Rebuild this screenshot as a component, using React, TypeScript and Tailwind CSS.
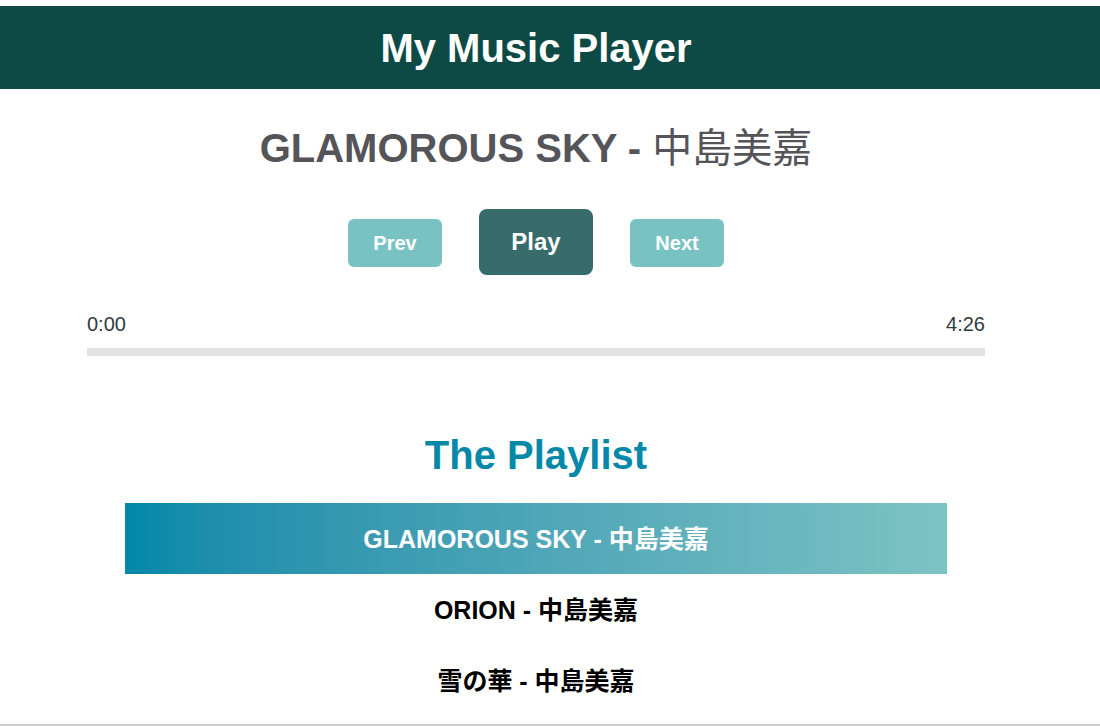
import React from "react";

const songs = [
  { title: "GLAMOROUS SKY", artist: "中島美嘉" },
  { title: "ORION", artist: "中島美嘉" },
  { title: "雪の華", artist: "中島美嘉" },
];

export default function App() {
  return (
    <div className="w-[1100px] h-[726px] overflow-hidden bg-white font-['Liberation_Sans','Noto_Sans_CJK_JP',sans-serif] flex flex-col">
      <header className="mt-[6px] h-[83px] w-full bg-[#0d4a45] shrink-0">
        <div className="w-[1072px] h-full flex items-center justify-center">
          <h1 className="text-[40px] leading-[48px] font-bold text-white">My Music Player</h1>
        </div>
      </header>
      <main className="w-[1072px] flex flex-col items-center">
        <h2 className="mt-[35px] text-[40px] leading-[48px] text-[#545459] whitespace-nowrap">
          <span className="font-bold">GLAMOROUS SKY - </span>
          <span className="font-normal">中島美嘉</span>
        </h2>
        <div className="mt-[37px] flex items-center gap-[37px]">
          <button className="mt-[2px] w-[94px] h-[48px] rounded-[6px] bg-[#79c2c4] text-white font-bold text-[20px]">Prev</button>
          <button className="w-[114px] h-[66px] rounded-[8px] bg-[#386b6c] text-white font-bold text-[24px]">Play</button>
          <button className="mt-[2px] w-[94px] h-[48px] rounded-[6px] bg-[#79c2c4] text-white font-bold text-[20px]">Next</button>
        </div>
        <div className="mt-[37px] w-[898px] flex justify-between text-[20px] leading-[24px] text-[#2f3b40]">
          <span>0:00</span>
          <span>4:26</span>
        </div>
        <div className="mt-[12px] w-[898px] h-[8px] bg-[#e2e2e2]" />
        <h2 className="mt-[75px] text-[40px] leading-[48px] font-bold text-[#0689a8]">The Playlist</h2>
        <ul className="mt-[24px] w-[822px] flex flex-col">
          {songs.map((s, i) => (
            <li
              key={i}
              className={
                i === 0
                  ? "h-[71px] pt-[3px] flex items-center justify-center text-[25px] font-bold text-white bg-gradient-to-r from-[#0088a9] to-[#7cc3c4]"
                  : "h-[71px] pt-[3px] flex items-center justify-center text-[25px] font-bold text-black"
              }
            >
              {s.title} - {s.artist}
            </li>
          ))}
        </ul>
      </main>
      <div className="mt-[8px] w-full h-[2px] bg-[#cccccc] shrink-0" />
    </div>
  );
}
